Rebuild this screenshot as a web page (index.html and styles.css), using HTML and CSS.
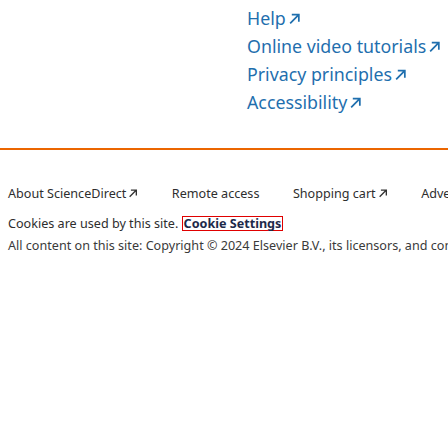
FILE: index.html
```html
<!DOCTYPE html>
<html>
<head>
<meta charset="utf-8">
<link rel="stylesheet" href="styles.css">
</head>
<body>
<div class="top">
  <ul class="help-links">
    <li><a href="#">Help<svg class="arr big" viewBox="0 0 12 12"><path d="M2 10.5 L10 2.5 M3.5 2.5 H10 V9"/></svg></a></li>
    <li><a href="#">Online video tutorials<svg class="arr big" viewBox="0 0 12 12"><path d="M2 10.5 L10 2.5 M3.5 2.5 H10 V9"/></svg></a></li>
    <li><a href="#">Privacy principles<svg class="arr big" viewBox="0 0 12 12"><path d="M2 10.5 L10 2.5 M3.5 2.5 H10 V9"/></svg></a></li>
    <li><a href="#">Accessibility<svg class="arr big" viewBox="0 0 12 12"><path d="M2 10.5 L10 2.5 M3.5 2.5 H10 V9"/></svg></a></li>
  </ul>
</div>
<footer class="footer">
  <ul class="foot-links">
    <li><a href="#">About ScienceDirect<svg class="arr small" viewBox="0 0 12 12"><path d="M2 10.5 L10 2.5 M3.5 2.5 H10 V9"/></svg></a></li>
    <li><a href="#">Remote access</a></li>
    <li><a href="#">Shopping cart<svg class="arr small" viewBox="0 0 12 12"><path d="M2 10.5 L10 2.5 M3.5 2.5 H10 V9"/></svg></a></li>
    <li><a href="#">Advertise</a></li>
  </ul>
  <p class="cookies">Cookies are used by this site. <button class="cookie-btn">Cookie Settings</button></p>
  <p class="copy">All content on this site: Copyright © 2024 Elsevier B.V., its licensors, and contributors.</p>
</footer>
</body>
</html>
```
FILE: styles.css
```css
html, body {
  margin: 0;
  padding: 0;
  background: #fff;
  width: 448px;
  height: 448px;
  overflow: hidden;
}
body {
  font-family: "Noto Sans", sans-serif;
}
a {
  text-decoration: none;
}
.top {
  padding: 4px 0 0 247px;
  height: 144px;
  border-bottom: 2px solid #eb6500;
}
.help-links {
  list-style: none;
  margin: 0;
  padding: 0;
}
.help-links li {
  font-size: 17.8px;
  line-height: 28px;
  white-space: nowrap;
}
.help-links a {
  color: #1f6fae;
}
.arr {
  fill: none;
  stroke: currentColor;
  stroke-width: 1.6;
}
.arr.big {
  width: 13px;
  height: 13px;
  margin-left: 2px;
}
.arr.small {
  width: 10px;
  height: 10px;
  margin-left: 2px;
  stroke: #333;
}
.footer {
  padding: 35px 0 0 8px;
  font-size: 12.6px;
  color: #2e2e2e;
  white-space: nowrap;
  overflow: hidden;
}
.foot-links {
  list-style: none;
  margin: 0;
  padding: 0;
  display: flex;
  gap: 33.5px;
}
.foot-links a {
  color: #2e2e2e;
}
.cookies {
  margin: 13px 0 0;
  line-height: 18px;
}
.cookie-btn {
  font: inherit;
  font-weight: bold;
  color: #1d2a4a;
  background: none;
  border: 1px solid #e00000;
  padding: 0 1px;
  margin: 0;
  line-height: 13px;
}
.copy {
  margin: 4px 0 0;
  line-height: 18px;
  color: #3a3a3a;
}
```
